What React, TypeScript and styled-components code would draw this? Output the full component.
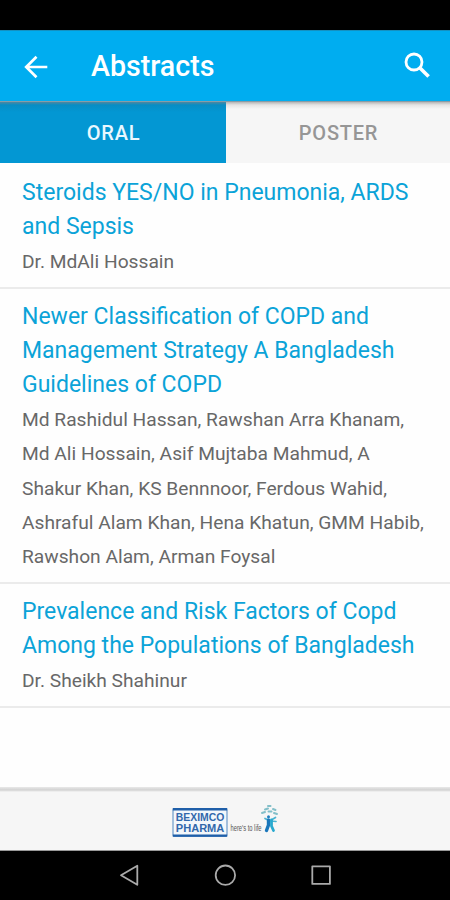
import React from "react";
import styled, { createGlobalStyle } from "styled-components";

const GlobalStyle = createGlobalStyle`
  * { box-sizing: border-box; }
  body { margin: 0; background: #fff; font-family: Roboto, "Liberation Sans", sans-serif; }
`;

const Screen = styled.div`
  width: 450px;
  height: 900px;
  display: flex;
  flex-direction: column;
  overflow: hidden;
  background: #fefefe;
`;

const StatusBar = styled.div`
  flex: none;
  height: 30px;
  background: #000;
`;

const Toolbar = styled.header`
  flex: none;
  height: 72px;
  display: flex;
  align-items: center;
  padding: 0 18px 1px 21px;
  background: #00adf0;
  border-top: 1px solid #1590c0;
  border-bottom: 1px solid #8a9ca5;
`;

const IconButton = styled.button`
  display: flex;
  padding: 0;
  border: 0;
  background: none;
  color: #fff;
`;

const PageTitle = styled.h1`
  flex: 1;
  margin: 0 0 0 41px;
  font-size: 28.6px;
  line-height: 34px;
  font-weight: 500;
  color: #fff;
`;

const Tabs = styled.nav`
  flex: none;
  display: grid;
  grid-template-columns: 226px 224px;
  height: 61px;
`;

const Tab = styled.button<{ $active?: boolean }>`
  padding: 1px 0 0 1px;
  border: 0;
  font: 500 20px/24px Roboto, "Liberation Sans", sans-serif;
  letter-spacing: 0.8px;
  color: ${(p) => (p.$active ? "#e9f8ff" : "#969696")};
  background: ${(p) =>
    p.$active
      ? "linear-gradient(#4f88a0, #078dc4 3px, #0397d3 10px)"
      : "linear-gradient(#b5b5b5, #e4e4e4 3px, #f6f6f6 7px)"};
`;

const List = styled.main`
  flex: 1;
  padding-top: 1px;
`;

const Entry = styled.article`
  height: 123.6px;
  padding: 10.8px 0 0 22px;
  border-bottom: 2px solid #ebebeb;
  white-space: nowrap;

  &:first-child { height: 125px; padding-top: 11.7px; }
  &:nth-child(2) { height: 295px; }
`;

const EntryTitle = styled.h2`
  margin: 0 0 0.8px;
  font-size: 23px;
  line-height: 34.2px;
  font-weight: 400;
  color: #0ba3d8;
`;

const Authors = styled.p`
  margin: 0;
  font-size: 19.2px;
  line-height: 34.2px;
  color: #686868;
`;

const Line = styled.span`
  display: block;
`;

const Sponsor = styled.footer`
  flex: none;
  height: 64px;
  display: flex;
  justify-content: center;
  padding: 4px 0 0 2px;
  background: linear-gradient(#e9e9e9, #d2d2d2 3px, #f6f6f6 5px);
  border-bottom: 1px solid #999;
`;

const NavBar = styled.div`
  flex: none;
  height: 49px;
  background: #000;
  display: flex;
  justify-content: center;
`;

const entries = [
  {
    title: ["Steroids YES/NO in Pneumonia, ARDS", "and Sepsis"],
    authors: ["Dr. MdAli Hossain"],
  },
  {
    title: ["Newer Classification of COPD and", "Management Strategy A Bangladesh", "Guidelines of COPD"],
    authors: [
      "Md Rashidul Hassan, Rawshan Arra Khanam,",
      "Md Ali Hossain, Asif Mujtaba Mahmud, A",
      "Shakur Khan, KS Bennnoor, Ferdous Wahid,",
      "Ashraful Alam Khan, Hena Khatun, GMM Habib,",
      "Rawshon Alam, Arman Foysal",
    ],
  },
  {
    title: ["Prevalence and Risk Factors of Copd", "Among the Populations of Bangladesh"],
    authors: ["Dr. Sheikh Shahinur"],
  },
];

const SponsorLogo = () => (
  <svg width="110" height="59" viewBox="171 791 110 59" aria-label="Beximco Pharma">
    <rect x="173" y="808.5" width="54" height="28" rx="1.5" fill="#f3f7fb" stroke="#6d9aca" strokeWidth="1.2" />
    <path d="M172.8 809.3h54.4M172.8 835.6h54.4" stroke="#1f5fa9" strokeWidth="2.4" />
    <g fill="#3268ab" fontFamily="Liberation Sans, sans-serif" fontWeight="700" fontSize="10">
      <text x="175.8" y="821.4" textLength="48.5" lengthAdjust="spacingAndGlyphs">BEXIMCO</text>
      <text x="175.8" y="831.6" textLength="48.5" lengthAdjust="spacingAndGlyphs">PHARMA</text>
    </g>
    <text x="230.5" y="831.3" fill="#555" fontFamily="Liberation Sans, sans-serif" fontSize="9" textLength="31" lengthAdjust="spacingAndGlyphs">here's to life</text>
    <g fill="none" strokeLinecap="round">
      <path d="M262 813l3-1M265 809.5l3-1M268 806h2.5M273 809l2.5 1M274 813l3 1M268.5 811.5h3" stroke="#83bfc9" strokeWidth="2" />
      <path d="M265 818.5l4 2M275.5 817.5l-5 3M276 821.5l-5-.5" stroke="#4bb4d2" strokeWidth="1.7" />
      <path d="M268.5 820v5l-2 5.5" stroke="#1976bb" strokeWidth="3.4" />
      <path d="M271.5 820v6l2 4.5" stroke="#28a9cf" strokeWidth="2.8" />
    </g>
    <circle cx="268.5" cy="816.8" r="1.5" fill="#2180c0" />
  </svg>
);

export default function App() {
  return (
    <>
      <GlobalStyle />
      <Screen>
        <StatusBar />
        <Toolbar>
          <IconButton aria-label="Back">
            <svg width="29" height="30" viewBox="21 51.5 29 30" fill="none" stroke="#fff" strokeWidth="2.7">
              <path d="M47.3 67.5H26M36.5 57.2L26.2 67.5l10.3 10.3" />
            </svg>
          </IconButton>
          <PageTitle>Abstracts</PageTitle>
          <IconButton aria-label="Search">
            <svg width="30" height="30" viewBox="402 51 30 30" fill="none" stroke="#fff">
              <circle cx="414" cy="62" r="8" strokeWidth="2.8" />
              <path d="M420 68l8.6 8.6" strokeWidth="3.6" />
            </svg>
          </IconButton>
        </Toolbar>
        <Tabs>
          <Tab $active>ORAL</Tab>
          <Tab>POSTER</Tab>
        </Tabs>
        <List>
          {entries.map((e) => (
            <Entry key={e.title[0]}>
              <EntryTitle>{e.title.map((t) => <Line key={t}>{t}</Line>)}</EntryTitle>
              <Authors>{e.authors.map((t) => <Line key={t}>{t}</Line>)}</Authors>
            </Entry>
          ))}
        </List>
        <Sponsor><SponsorLogo /></Sponsor>
        <NavBar>
          <svg width="214" height="49" viewBox="118 851 214 49" fill="none" stroke="#aaa" strokeWidth="1.8" strokeLinejoin="round">
            <path d="M137.3 865.8v19L121 875.3z" />
            <circle cx="225.4" cy="875.2" r="9.7" />
            <path d="M312.3 866.3h17.6v17.6h-17.6z" />
          </svg>
        </NavBar>
      </Screen>
    </>
  );
}
